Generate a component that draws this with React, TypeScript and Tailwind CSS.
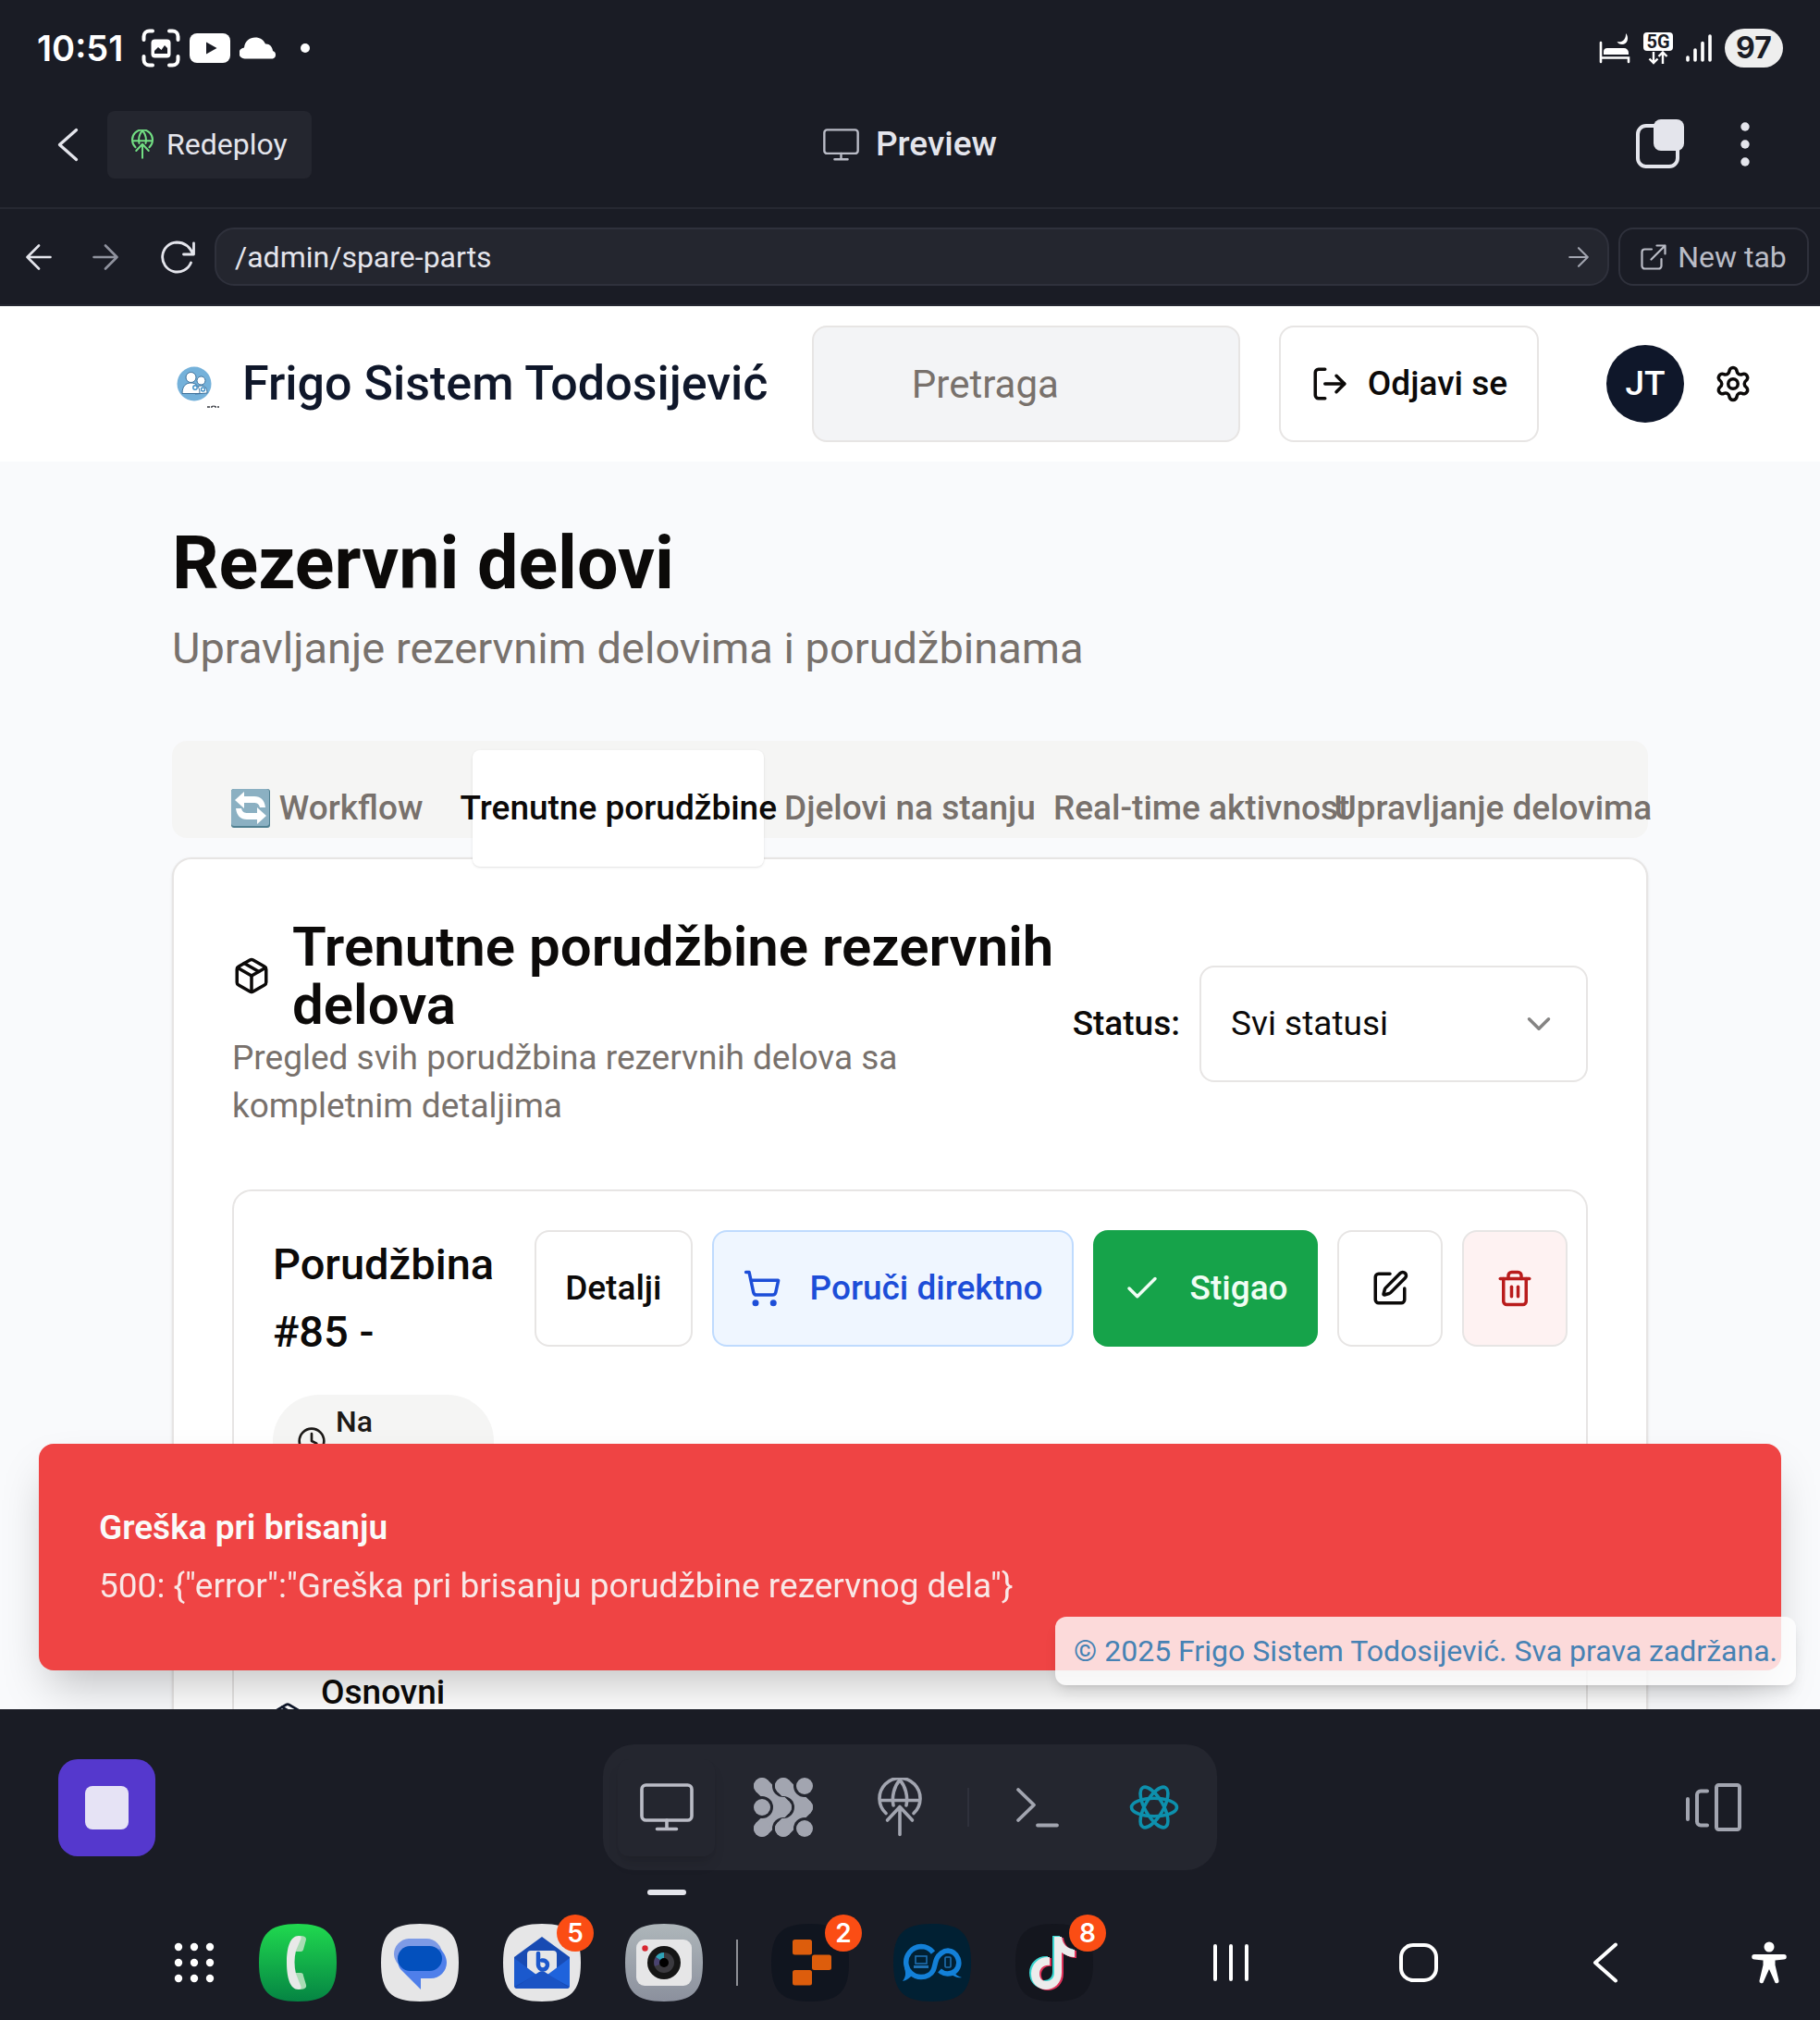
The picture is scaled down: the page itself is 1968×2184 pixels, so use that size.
import React from "react";
import { Package, LogOut, Settings, ChevronDown, ShoppingCart, Check, SquarePen, Trash2, Clock } from "lucide-react";

type IconProps = { className?: string };

/* ---------- status bar icons ---------- */

const CaptureIcon = () => (
  <svg width="42" height="42" viewBox="0 0 42 42" fill="none" aria-hidden="true">
    <path d="M2.5 12V8.500a6 6 0 0 1 6-6H12M30 2.500h3.500a6 6 0 0 1 6 6V12M39.500 30v3.500a6 6 0 0 1-6 6H30M12 39.500H8.500a6 6 0 0 1-6-6V30" stroke="#fff" strokeWidth="4" strokeLinecap="round" />
    <rect x="10.500" y="11.500" width="21" height="20" rx="4" fill="#fff" />
    <path d="M14 27v-3l4-4 3.500 3 3.500-5 3 3v6z" fill="#1a1c25" />
  </svg>
);

const PlayIcon = () => (
  <svg width="44" height="32" viewBox="0 0 44 32" aria-hidden="true">
    <rect width="44" height="32" rx="8" fill="#fff" />
    <path d="M18 9.500v13l11.500-6.500z" fill="#1a1c25" />
  </svg>
);

const CloudIcon = () => (
  <svg width="42" height="24" viewBox="0 0 42 24" aria-hidden="true">
    <path d="M6 23.500a6 6 0 0 1-1-12C6 4 11 .5 17 .5c5 0 9 2.500 11 7 4-.500 7.500 2.500 8 7.500a4.500 4.500 0 0 1 0 8.500z" fill="#fff" />
  </svg>
);

const BedIcon = () => (
  <svg width="34" height="34" viewBox="0 0 34 34" aria-hidden="true">
    <path d="M2 11v21M2 27.500h30V32" stroke="#fff" strokeWidth="2.600" strokeLinecap="round" fill="none" />
    <path d="M5 24v-3a4 4 0 0 1 4-4h18a5 5 0 0 1 5 5v2z" fill="#fff" />
    <path d="M29 1c4 4.500 2 12-4 12-2.500 0-4.500-1-5.500-3 5 1.500 10-2 9.500-9z" fill="#fff" />
  </svg>
);

const TransferIcon = () => (
  <svg width="24" height="15" viewBox="0 0 24 15" fill="none" stroke="#fff" strokeWidth="2.400" aria-hidden="true">
    <path d="M7 1v11.500M2.500 8.500 7 13l4.500-4.500M17 14V2M12.500 6 17 1.500 21.500 6" />
  </svg>
);

const SignalIcon = () => (
  <svg width="28" height="30" viewBox="0 0 28 30" stroke="#fff" strokeWidth="3.600" strokeLinecap="round" aria-hidden="true">
    <path d="M2 25v3M10 17v11M18 9.500V28M26 2v26" />
  </svg>
);

/* ---------- workspace icons ---------- */

const DeployIcon = ({ className, stroke = 3.6 }: IconProps & { stroke?: number }) => (
  <svg viewBox="0 0 48 64" className={className} fill="none" stroke="currentColor" strokeWidth={stroke} strokeLinecap="round" strokeLinejoin="round" aria-hidden="true">
    <path d="M9 38.500A22 22 0 1 1 39 38.500M2.500 24.500h43" />
    <path d="M17 30C15 20 18 9 24 2.500 30 9 33 20 31 30" />
    <path d="M24 61.500V32M10.500 46 24 31.500 37.500 46" />
  </svg>
);

const MonitorIcon = ({ className, stroke = 3.6 }: IconProps & { stroke?: number }) => (
  <svg viewBox="0 0 58 52" className={className} fill="none" stroke="currentColor" strokeWidth={stroke} strokeLinecap="round" aria-hidden="true">
    <rect x="2" y="2" width="54" height="38" rx="4.500" />
    <path d="M29 40v9.500M18.500 49.500h21" />
  </svg>
);

const BackChevron = ({ className }: IconProps) => (
  <svg viewBox="0 0 28 44" className={className} fill="none" stroke="currentColor" strokeWidth="4" strokeLinecap="round" strokeLinejoin="round" aria-hidden="true">
    <path d="M25 2.500 3 22l22 19.500" />
  </svg>
);

const ArrowIcon = ({ className }: IconProps) => (
  <svg viewBox="0 0 28 28" className={className} fill="none" stroke="currentColor" strokeWidth="2.600" strokeLinecap="round" strokeLinejoin="round" aria-hidden="true">
    <path d="M1.500 14h25M14 1.500 26.500 14 14 26.500" />
  </svg>
);

const ReloadIcon = () => (
  <svg width="40" height="36" viewBox="0 0 40 36" fill="none" stroke="#e4e5ec" strokeWidth="2.800" strokeLinecap="round" strokeLinejoin="round" aria-hidden="true">
    <path d="M37.500 3v12H26.500M37 15C33 6 26 2 19 2a16 16 0 1 0 15.500 22" />
  </svg>
);

const ExternalIcon = () => (
  <svg width="28" height="28" viewBox="0 0 28 28" fill="none" stroke="currentColor" strokeWidth="2.200" strokeLinecap="round" strokeLinejoin="round" aria-hidden="true">
    <path d="M12 5.500H4.500a3 3 0 0 0-3 3v15a3 3 0 0 0 3 3h15a3 3 0 0 0 3-3V16M17.500 1.500h9v9M26.500 1.500 11.500 16.500" />
  </svg>
);

const PanesIcon = () => (
  <svg width="52" height="54" viewBox="0 0 52 54" aria-hidden="true">
    <rect x="2" y="7" width="43" height="44" rx="9" fill="none" stroke="#e4e5ec" strokeWidth="4" />
    <rect x="19" y="0" width="33" height="34" rx="8" fill="#e4e5ec" />
  </svg>
);

const DotsIcon = () => (
  <svg width="12" height="50" viewBox="0 0 12 50" fill="#e4e5ec" aria-hidden="true">
    <circle cx="6" cy="6" r="4.700" />
    <circle cx="6" cy="25" r="4.700" />
    <circle cx="6" cy="44" r="4.700" />
  </svg>
);

const AgentIcon = () => (
  <svg width="64" height="64" viewBox="0 0 64 64" fill="#a2a5b0" aria-hidden="true">
    <mask id="wave-left" maskUnits="userSpaceOnUse" x="0" y="0" width="64" height="64">
      <rect width="64" height="64" fill="#fff" />
      <circle cx="9" cy="32" r="12" fill="#000" />
      <circle cx="32" cy="9" r="12" fill="#000" />
      <circle cx="32" cy="55" r="12" fill="#000" />
    </mask>
    <mask id="wave-right" maskUnits="userSpaceOnUse" x="0" y="0" width="64" height="64">
      <rect width="64" height="64" fill="#fff" />
      <circle cx="32" cy="32" r="12" fill="#000" />
      <circle cx="55" cy="9" r="12" fill="#000" />
      <circle cx="55" cy="55" r="12" fill="#000" />
    </mask>
    <path d="M9 9 32 32 9 55" fill="none" stroke="#a2a5b0" strokeWidth="18" strokeLinejoin="round" strokeLinecap="round" mask="url(#wave-left)" />
    <path d="M32 9 55 32 32 55" fill="none" stroke="#a2a5b0" strokeWidth="18" strokeLinejoin="round" strokeLinecap="round" mask="url(#wave-right)" />
    {[9, 32, 55].map((x) => [9, 32, 55].map((y) => <circle key={`${x}-${y}`} cx={x} cy={y} r="9" />))}
  </svg>
);

const ShellIcon = () => (
  <svg width="48" height="44" viewBox="0 0 48 44" fill="none" stroke="#a2a5b0" strokeWidth="3.800" strokeLinecap="round" strokeLinejoin="round" aria-hidden="true">
    <path d="M3 3 20 19.500 3 36M24 41.500h21" />
  </svg>
);

const AtomIcon = () => (
  <svg width="54" height="54" viewBox="0 0 54 54" fill="none" stroke="#0d90ad" strokeWidth="3.600" aria-hidden="true">
    <ellipse cx="27" cy="27" rx="24.500" ry="9.800" />
    <ellipse cx="27" cy="27" rx="24.500" ry="9.800" transform="rotate(60 27 27)" />
    <ellipse cx="27" cy="27" rx="24.500" ry="9.800" transform="rotate(120 27 27)" />
  </svg>
);

const SwitcherIcon = () => (
  <svg width="60" height="52" viewBox="0 0 60 52" fill="none" stroke="#a2a5b0" strokeWidth="4" strokeLinecap="round" strokeLinejoin="round" aria-hidden="true">
    <path d="M2 17v22M23 8.500h-7a4 4 0 0 0-4 4v29a4 4 0 0 0 4 4h7" />
    <rect x="33" y="2" width="25" height="48" rx="2.500" />
  </svg>
);

/* ---------- app page drawings ---------- */

const BrandLogo = () => (
  <svg width="52" height="52" viewBox="0 0 52 52" aria-hidden="true">
    <circle cx="20" cy="26" r="18.500" fill="#74b1da" />
    <g fill="#fff" stroke="#3c6f99" strokeWidth="1">
      <circle cx="27.500" cy="22.500" r="4.500" />
      <path d="M21 37c0-6 2-9 6.500-9S34 31 34 36z" />
      <circle cx="16.500" cy="19" r="5.500" />
      <path d="M7 36.500c0-8 4-11.500 9.500-11.500S26 28.500 26 36.500z" />
    </g>
    <circle cx="21" cy="30" r="2.200" fill="none" stroke="#3f8fc6" strokeWidth="1.400" />
    <circle cx="29.500" cy="32" r="2" fill="none" stroke="#3f8fc6" strokeWidth="1.400" />
    <path d="M34 51h5l2-1.500 2 1.500h4" stroke="#33363d" strokeWidth="1.400" fill="none" strokeDasharray="3 1" />
  </svg>
);

const CycleBadge = () => (
  <svg width="42" height="42" viewBox="0 0 42 42" aria-hidden="true">
    <rect width="42" height="42" rx="3" fill="#4f7f90" />
    <rect width="41" height="40" rx="3" fill="#8bb0c2" />
    <path d="M4 12 14 3v5h11c7 0 11 4 12 12h-6c-1-4-3-5-7-5H14v6z" fill="#fff" />
    <path d="M38 29 28 38v-5H17C10 33 6 29 5 21h6c1 4 3 5 7 5h10v-6z" fill="#fff" />
  </svg>
);

/* ---------- dock ---------- */

const SQUIRCLE = "M0 42C0 11 11 0 42 0S84 11 84 42 73 84 42 84 0 73 0 42Z";

const PhoneApp = () => (
  <svg width="84" height="84" viewBox="0 0 84 84" aria-hidden="true">
    <defs>
      <linearGradient id="phone" x1="0" y1="0" x2="0" y2="1">
        <stop offset="0" stopColor="#20d94f" />
        <stop offset="1" stopColor="#058443" />
      </linearGradient>
    </defs>
    <path d={SQUIRCLE} fill="url(#phone)" />
    <path d="M44 13c5 0 7 1 7 4l-3 11c-1 2-2 2-4 2h-5V18zM39 53h6c2 0 3 1 3 3l3 10c1 4-3 5-8 5l-5-5z" fill="#a9dcb4" />
    <path d="M43 13c2 0 3 1 2.500 3L40 29c-2 8-2 17 0 25l5.500 14c.500 2-1 3-3 3C34 71 30 59 30 42s4-29 13-29z" fill="#e8e9e8" />
  </svg>
);

const MessagesApp = () => (
  <svg width="84" height="84" viewBox="0 0 84 84" aria-hidden="true">
    <path d={SQUIRCLE} fill="#e6e6e7" />
    <path d="M30 16h19a17 17 0 0 1 17 17H40v15L18 43a17 17 0 0 1-4-10 17 17 0 0 1 16-17z" fill="#7d9ae6" />
    <path d="M64 27c4 4 7 9 7 15a17 17 0 0 1-17 17H43v12L21 49c-3-5-4-8 0-12z" fill="#4f7fea" />
    <rect x="18" y="24" width="48" height="27" rx="13.500" fill="#0350bd" />
  </svg>
);

const MailApp = () => (
  <svg width="84" height="84" viewBox="0 0 84 84" aria-hidden="true">
    <path d={SQUIRCLE} fill="#e6e6e7" />
    <path d="M42 14 72 36v31a3 3 0 0 1-3 3H15a3 3 0 0 1-3-3V36z" fill="#184bb3" />
    <path d="M30 29h24a4 4 0 0 1 4 4v17L48 60H36L26 50V33a4 4 0 0 1 4-4z" fill="#e6e6e7" />
    <path d="M12 37 36 55 12 68z" fill="#1b59cd" />
    <path d="M72 37 48 55l24 13z" fill="#1f63dc" />
    <path d="m13 69 26-17c2-1 4-1 6 0l26 17-2 1H15z" fill="#1a53c4" />
    <path d="M38 32v12.500a5 5 0 1 0 4-5" fill="none" stroke="#1b57cb" strokeWidth="4.500" strokeLinecap="round" />
  </svg>
);

const CameraApp = () => (
  <svg width="84" height="84" viewBox="0 0 84 84" aria-hidden="true">
    <defs>
      <linearGradient id="camera" x1="0" y1="0" x2="0" y2="1">
        <stop offset="0" stopColor="#aeb6ba" />
        <stop offset="1" stopColor="#8b909d" />
      </linearGradient>
    </defs>
    <path d={SQUIRCLE} fill="url(#camera)" />
    <rect x="12" y="17" width="60" height="50" rx="9" fill="#e6e6e7" />
    <circle cx="21.500" cy="26.500" r="3.200" fill="#d8262f" />
    <circle cx="42" cy="42" r="18" fill="#151515" />
    <circle cx="42" cy="42" r="11" fill="#3b3a3f" />
    <path d="M42 31a11 11 0 0 0-9 5l9 6z" fill="#2fa3b8" />
    <path d="M33 36a11 11 0 0 0-1 10l10-4z" fill="#4a4370" />
    <circle cx="42" cy="42" r="5" fill="#000" />
  </svg>
);

const BlocksApp = () => (
  <svg width="84" height="84" viewBox="0 0 84 84" aria-hidden="true">
    <path d={SQUIRCLE} fill="#10151f" />
    <g fill="#dd5d0c">
      <rect x="23" y="17" width="21" height="16.500" rx="2.500" />
      <rect x="44" y="33.500" width="21" height="16.500" rx="2.500" />
      <rect x="23" y="50" width="21" height="16.500" rx="2.500" />
    </g>
  </svg>
);

const InfinityApp = () => (
  <svg width="84" height="84" viewBox="0 0 84 84" aria-hidden="true">
    <path d={SQUIRCLE} fill="#012033" />
    <g fill="none" stroke="#1380d8" strokeWidth="5.500">
      <path d="M43 31C39 26 34 24.500 30 24.500a17 17 0 0 0-16 20c1 6 7 13 16 13 6 0 11-3 13-7s2-9 4-13 7-8.500 12-8.500a13 13 0 0 1 8 22c-5 4-12 4-17-.500" />
    </g>
    <path d="M12 48c4 0 7 3 9 7-3 3-6 6-11 7 3-4 4-8 2-14zM66 52c1 3 4 5 8 6-4 1-9-1-12-4z" fill="#1380d8" />
    <g fill="none" stroke="#1f6fb0" strokeWidth="1.600">
      <rect x="24" y="35" width="12" height="8" />
      <path d="M22 46.500h16" strokeWidth="3" />
      <rect x="56" y="36" width="6" height="11" rx="1" />
    </g>
  </svg>
);

const NOTE = "M42 14h8c1 8 6 13 14 14v8c-5 0-10-2-14-5v22c0 11-8 18-17 18S17 64 17 54c0-11 9-19 20-18v9c-6-1-11 3-11 9 0 5 3 8 7 8 5 0 9-3 9-9z";

const NoteApp = () => (
  <svg width="84" height="84" viewBox="0 0 84 84" aria-hidden="true">
    <path d={SQUIRCLE} fill="#14161e" />
    <path d={NOTE} fill="#3ad6d1" transform="translate(-2 -1)" />
    <path d={NOTE} fill="#e0325a" transform="translate(2 1)" />
    <path d={NOTE} fill="#ececec" />
  </svg>
);

function DockApp({ label, badge, children }: { label: string; badge?: string; children: React.ReactNode }) {
  return (
    <button type="button" aria-label={label} className="relative shrink-0">
      {children}
      {badge && (
        <span className="absolute -right-3.5 -top-2.5 flex size-10 items-center justify-center rounded-full bg-[#fb4d14] text-[28px] leading-none font-semibold text-white">
          {badge}
        </span>
      )}
    </button>
  );
}

const dockApps = [
  { label: "Phone", icon: <PhoneApp /> },
  { label: "Messages", icon: <MessagesApp /> },
  { label: "Mail", icon: <MailApp />, badge: "5" },
  { label: "Camera", icon: <CameraApp /> },
];

const recentApps = [
  { label: "Workspace", icon: <BlocksApp />, badge: "2" },
  { label: "Remote", icon: <InfinityApp /> },
  { label: "Videos", icon: <NoteApp />, badge: "8" },
];

/* ---------- sections ---------- */

function StatusBar() {
  return (
    <div className="flex h-[104px] items-center justify-between px-10 text-white">
      <div className="flex items-center">
        <span className="font-['Inter'] text-[38px] font-semibold">10:51</span>
        <div className="ml-5 flex items-center gap-2.5">
          <CaptureIcon />
          <PlayIcon />
          <CloudIcon />
        </div>
        <span className="ml-6 size-2.5 rounded-full bg-white" />
      </div>
      <div className="flex items-center gap-3.5">
        <BedIcon />
        <div className="flex flex-col items-center">
          <span className="flex h-5 w-8 items-center justify-center rounded bg-white font-['Roboto'] text-[20px] leading-none font-bold text-[#1a1c25]">5G</span>
          <TransferIcon />
        </div>
        <SignalIcon />
        <span className="flex h-[42px] w-[63px] items-center justify-center rounded-full bg-[#eee] font-['Inter'] text-[32px] font-bold text-[#1a1c25]">97</span>
      </div>
    </div>
  );
}

function PreviewHeader() {
  return (
    <header className="grid h-[122px] grid-cols-[1fr_auto_1fr] items-start border-b-2 border-[#262832] px-[62px] text-[#e4e5ec]">
      <div className="flex h-[104px] items-center gap-[31px]">
        <button type="button" aria-label="Back">
          <BackChevron className="h-[37px] w-[23px]" />
        </button>
        <button type="button" className="flex h-[73px] items-center gap-3.5 rounded-lg bg-[#24262f] px-[26px] text-[32px]">
          <DeployIcon className="h-8 w-6 text-[#72de83]" stroke={4} />
          Redeploy
        </button>
      </div>
      <h1 className="flex h-[104px] items-center gap-[18px] text-[37px] font-medium">
        <MonitorIcon className="h-[35px] w-[39px] text-[#b9bbc6]" />
        Preview
      </h1>
      <div className="flex h-[104px] items-center justify-end gap-[60px] pr-[13px]">
        <button type="button" aria-label="Panes">
          <PanesIcon />
        </button>
        <button type="button" aria-label="More">
          <DotsIcon />
        </button>
      </div>
    </header>
  );
}

function AddressBar() {
  return (
    <div className="flex h-[105px] items-center border-b-2 border-[#262832] pl-7 pr-3 text-[#e4e5ec]">
      <div className="flex items-center gap-11">
        <button type="button" aria-label="Go back" className="rotate-180">
          <ArrowIcon className="size-[28px]" />
        </button>
        <button type="button" aria-label="Go forward" className="text-[#8f929e]">
          <ArrowIcon className="size-[28px]" />
        </button>
        <button type="button" aria-label="Reload">
          <ReloadIcon />
        </button>
      </div>
      <div className="ml-5 flex h-[63px] flex-1 items-center rounded-[21px] border-2 border-[#2f313c] bg-[#24262f] px-5">
        <input aria-label="Address" defaultValue="/admin/spare-parts" className="min-w-0 flex-1 bg-transparent text-[32px] outline-none" />
        <button type="button" aria-label="Go" className="text-[#a2a5b0]">
          <ArrowIcon className="size-[22px]" />
        </button>
      </div>
      <a href="#new-tab" className="ml-2.5 flex h-[63px] w-[206px] items-center justify-center gap-3 rounded-2xl border-2 border-[#2f313c] text-[32px] whitespace-nowrap text-[#babcc6]">
        <ExternalIcon />
        New tab
      </a>
    </div>
  );
}

function SiteHeader() {
  return (
    <header className="flex h-[168px] items-center bg-white pl-[190px] pr-[73px]">
      <BrandLogo />
      <span className="ml-5 flex-1 text-[52px] font-medium whitespace-nowrap text-[#0f172a]">Frigo Sistem Todosijević</span>
      <input
        type="search"
        aria-label="Pretraga"
        placeholder="Pretraga"
        className="h-[126px] w-[463px] rounded-2xl border-2 border-[#e7e5e4] bg-[#f3f4f6] pl-[106px] text-[42px] outline-none placeholder:text-[#78716c]"
      />
      <button type="button" className="ml-[42px] flex h-[126px] items-center gap-5 rounded-2xl border-2 border-[#e7e5e4] px-8 text-[37px] font-medium whitespace-nowrap text-[#0c0a09]">
        <LogOut className="size-[42px]" strokeWidth={2} />
        Odjavi se
      </button>
      <span className="ml-[73px] flex size-[84px] items-center justify-center rounded-full bg-[#0f172a] text-[37px] font-medium text-white">JT</span>
      <button type="button" aria-label="Settings" className="ml-8">
        <Settings className="size-[42px] text-[#0c0a09]" strokeWidth={2} />
      </button>
    </header>
  );
}

const tabs = ["Workflow", "Trenutne porudžbine", "Djelovi na stanju", "Real-time aktivnost", "Upravljanje delovima"];

function Tabs() {
  return (
    <div role="tablist" className="relative z-10 grid h-[105px] grid-cols-5 rounded-2xl bg-[#f5f5f4] p-2.5">
      {tabs.map((tab, i) => (
        <button
          key={tab}
          type="button"
          role="tab"
          aria-selected={i === 1}
          className={
            i === 1
              ? "flex h-[126px] min-w-0 items-center justify-center rounded-lg bg-white text-[37px] font-medium whitespace-nowrap text-[#0c0a09] shadow-sm"
              : "flex h-[126px] min-w-0 items-center justify-center gap-2.5 text-[37px] font-medium whitespace-nowrap text-[#78716c]"
          }
        >
          {i === 0 && <CycleBadge />}
          {tab}
        </button>
      ))}
    </div>
  );
}

function OrderCard() {
  return (
    <article className="mt-16 h-[900px] rounded-[21px] border-2 border-[#e7e5e4] p-[42px] text-[#0c0a09]">
      <div className="flex items-start gap-11">
        <div className="flex-1">
          <h3 className="text-[47px] leading-[73px] font-medium">Porudžbina #85 -</h3>
          <div className="mt-8 flex h-[100px] items-center gap-2.5 rounded-[50px] bg-[#f5f5f4] px-[26px] text-[32px] font-medium text-[#1c1917]">
            <Clock className="size-8" strokeWidth={2} />
            <span className="h-[84px] leading-[42px]">Na</span>
          </div>
        </div>
        <div className="flex shrink-0 gap-[21px] text-[37px] font-medium whitespace-nowrap">
          <button type="button" className="h-[126px] rounded-2xl border-2 border-[#e7e5e4] px-[31px]">
            Detalji
          </button>
          <button type="button" className="flex h-[126px] items-center gap-[31px] rounded-2xl border-2 border-[#bfdbfe] bg-[#eff6ff] px-[31px] text-[#1d4ed8]">
            <ShoppingCart className="size-[42px]" strokeWidth={2} />
            Poruči direktno
          </button>
          <button type="button" className="flex h-[126px] items-center gap-[31px] rounded-2xl bg-[#16a34a] px-8 text-[#f0fdf4]">
            <Check className="size-[42px]" strokeWidth={2} />
            Stigao
          </button>
          <button type="button" aria-label="Izmeni" className="flex h-[126px] items-center rounded-2xl border-2 border-[#e7e5e4] px-[34px]">
            <SquarePen className="size-[42px]" strokeWidth={2} />
          </button>
          <button type="button" aria-label="Obriši" className="flex h-[126px] items-center rounded-2xl border-2 border-[#e7e5e4] bg-[#fef2f2] px-[34px] text-[#b91c1c]">
            <Trash2 className="size-[42px]" strokeWidth={2} />
          </button>
        </div>
      </div>
      <div className="mt-[203px] flex h-[90px] items-center gap-5 text-[37px] font-medium">
        <Package className="size-8 text-[#0f172a]" strokeWidth={2} />
        <h4 className="self-start leading-[37px]">Osnovni</h4>
      </div>
    </article>
  );
}

function OrdersPanel() {
  return (
    <section className="mt-[21px] rounded-[21px] border-2 border-[#e7e5e4] bg-white px-[63px] pt-[63px] text-[#0c0a09] shadow-sm">
      <div className="flex items-center justify-between">
        <div className="w-[900px]">
          <h2 className="flex items-center gap-[23px] text-[60px] leading-[63px] font-semibold">
            <Package className="size-[42px] shrink-0" strokeWidth={2} />
            <span>Trenutne porudžbine rezervnih delova</span>
          </h2>
          <p className="max-w-[760px] text-[37px] leading-[52px] text-[#78716c]">Pregled svih porudžbina rezervnih delova sa kompletnim detaljima</p>
        </div>
        <div className="flex items-center gap-[21px] text-[37px]">
          <label htmlFor="status" className="font-medium">
            Status:
          </label>
          <div className="relative">
            <select id="status" className="h-[126px] w-[420px] appearance-none rounded-2xl border-2 border-[#e7e5e4] bg-white pl-8 outline-none">
              <option>Svi statusi</option>
            </select>
            <ChevronDown className="pointer-events-none absolute right-8 top-[42px] size-[42px] text-[#858483]" strokeWidth={2} />
          </div>
        </div>
      </div>
      <OrderCard />
    </section>
  );
}

function Workbench() {
  return (
    <div className="grid h-[196px] grid-cols-[1fr_auto_1fr] items-start px-[63px]">
      <div className="flex pt-[54px]">
        <button type="button" aria-label="Stop" className="flex size-[105px] items-center justify-center rounded-[21px] bg-[#5538cd]">
          <span className="size-[47px] rounded-lg bg-[#e6e3f5]" />
        </button>
      </div>
      <div className="mt-[38px] flex h-[136px] items-center gap-[21px] rounded-[34px] bg-[#24262f] px-4">
        <div className="relative">
          <button type="button" aria-label="Preview" className="flex size-[105px] items-center justify-center rounded-xl bg-[#24262f] text-[#babcc6] shadow-lg">
            <MonitorIcon className="h-[52px] w-[58px]" />
          </button>
          <span className="absolute -bottom-[42px] left-8 h-1.5 w-[42px] rounded-full bg-[#e4e5ec]" />
        </div>
        <button type="button" aria-label="Agent" className="flex size-[105px] items-center justify-center">
          <AgentIcon />
        </button>
        <button type="button" aria-label="Deployments" className="flex size-[105px] items-center justify-center">
          <DeployIcon className="h-16 w-12 text-[#a2a5b0]" />
        </button>
        <span className="h-[42px] w-0.5 bg-[#2f313c]" />
        <button type="button" aria-label="Shell" className="flex size-[105px] items-center justify-center">
          <ShellIcon />
        </button>
        <button type="button" aria-label="React" className="flex size-[105px] items-center justify-center">
          <AtomIcon />
        </button>
      </div>
      <div className="flex h-[212px] items-center justify-end pr-[22px]">
        <button type="button" aria-label="Switch panes">
          <SwitcherIcon />
        </button>
      </div>
    </div>
  );
}

function Dock() {
  return (
    <nav className="flex h-[140px] items-center justify-between pt-4 pl-[188px] pr-9 font-['Inter']">
      <div className="flex items-center gap-12">
        <button type="button" aria-label="Apps">
          <svg width="44" height="44" viewBox="0 0 44 44" fill="#fff" aria-hidden="true">
            {[5, 22, 39].map((x) => [5, 22, 39].map((y) => <circle key={`${x}-${y}`} cx={x} cy={y} r="4.200" />))}
          </svg>
        </button>
        {dockApps.map((app) => (
          <DockApp key={app.label} label={app.label} badge={app.badge}>
            {app.icon}
          </DockApp>
        ))}
        <span className="-mx-3 h-[50px] w-0.5 bg-[#8e9096]" />
        {recentApps.map((app) => (
          <DockApp key={app.label} label={app.label} badge={app.badge}>
            {app.icon}
          </DockApp>
        ))}
      </div>
      <div className="flex items-center">
        <button type="button" aria-label="Recents">
          <svg width="40" height="42" viewBox="0 0 40 42" stroke="#fff" strokeWidth="4" strokeLinecap="round" aria-hidden="true">
            <path d="M3 3v36M20 3v36M37 3v36" />
          </svg>
        </button>
        <button type="button" aria-label="Home" className="ml-[161px]">
          <svg width="44" height="44" viewBox="0 0 44 44" fill="none" stroke="#fff" strokeWidth="4" aria-hidden="true">
            <rect x="3" y="3" width="38" height="38" rx="13" />
          </svg>
        </button>
        <button type="button" aria-label="Back" className="ml-[166px] text-white">
          <BackChevron className="h-[44px] w-[28px]" />
        </button>
        <button type="button" aria-label="Accessibility" className="ml-[144px]">
          <svg width="38" height="46" viewBox="0 0 38 46" fill="#fff" aria-hidden="true">
            <circle cx="19" cy="6" r="5.500" />
            <path d="M3 14h32a2.700 2.700 0 0 1 0 5.500l-9.500 1v5l4 17a2.300 2.300 0 0 1-4.500 1L19 30l-6 13.500a2.300 2.300 0 0 1-4.500-1l4-17v-5l-9.500-1A2.700 2.700 0 0 1 3 14z" />
          </svg>
        </button>
      </div>
    </nav>
  );
}

export default function App() {
  return (
    <div className="flex h-screen w-full flex-col overflow-hidden bg-[#1a1c25] font-['Roboto',sans-serif]">
      <StatusBar />
      <PreviewHeader />
      <AddressBar />
      <main className="relative min-h-0 flex-1 overflow-hidden bg-[#f9fafc]">
        <SiteHeader />
        <div className="px-[186px] pt-[63px]">
          <h1 className="text-[79px] leading-[94px] font-bold text-[#0c0a09]">Rezervni delovi</h1>
          <p className="mt-2 text-[47px] leading-[73px] text-[#78716c]">Upravljanje rezervnim delovima i porudžbinama</p>
          <div className="mt-16">
            <Tabs />
            <OrdersPanel />
          </div>
        </div>
        <div role="alert" className="absolute inset-x-[42px] bottom-[42px] z-20 flex h-[245px] flex-col justify-center rounded-2xl bg-[#ef4444] px-[65px] pb-0.5 text-[37px] text-[#fafaf9] shadow-2xl">
          <p className="leading-[53px] font-semibold">Greška pri brisanju</p>
          <p className="mt-2.5 leading-[53px] opacity-90">{'500: {"error":"Greška pri brisanju porudžbine rezervnog dela"}'}</p>
        </div>
        <footer className="absolute bottom-[26px] right-[26px] z-30 flex h-[74px] items-center rounded-xl bg-white/80 px-5 text-[32px] text-[#4682b4] shadow-lg">
          © 2025 Frigo Sistem Todosijević. Sva prava zadržana.
        </footer>
      </main>
      <Workbench />
      <Dock />
    </div>
  );
}
